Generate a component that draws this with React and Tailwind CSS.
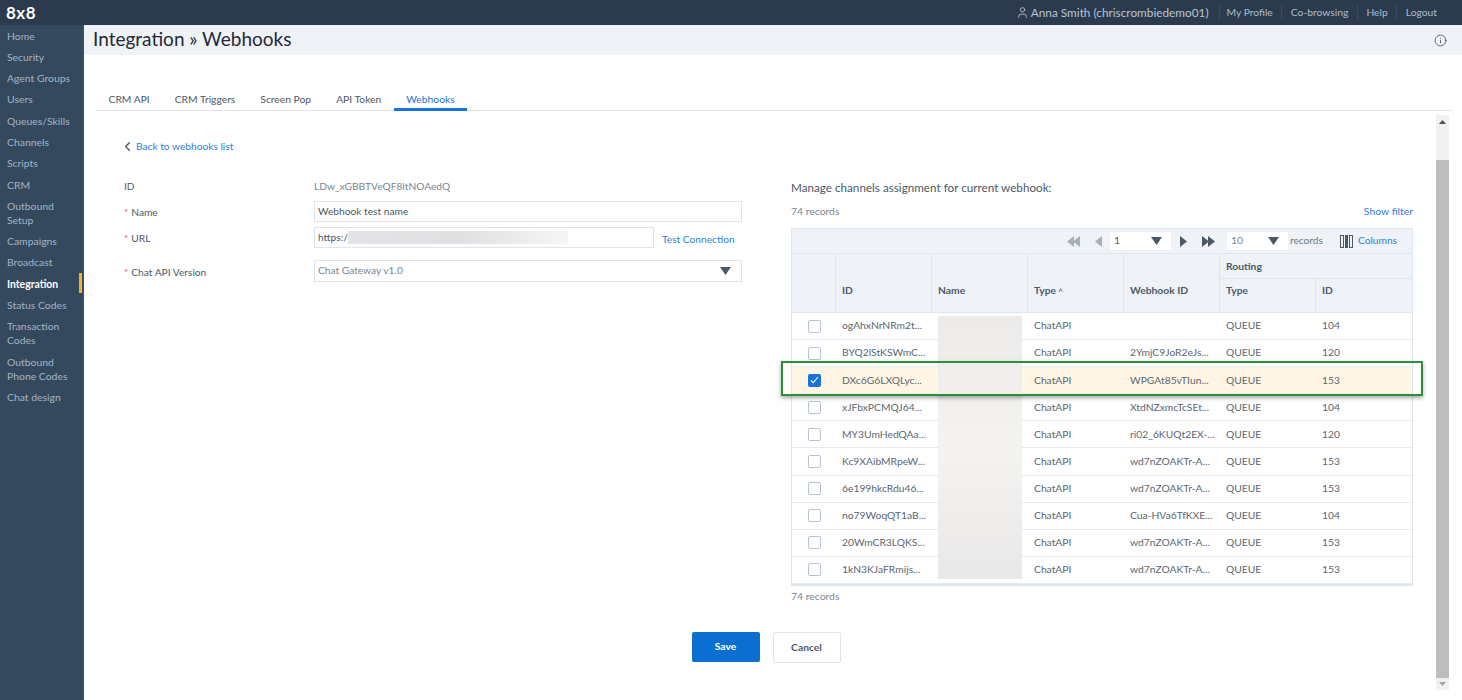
import { ChevronLeft, Info, User } from "lucide-react";

const nav = [
  "Home", "Security", "Agent Groups", "Users", "Queues/Skills", "Channels", "Scripts", "CRM",
  "Outbound Setup", "Campaigns", "Broadcast", "Integration", "Status Codes", "Transaction Codes",
  "Outbound Phone Codes", "Chat design",
];

const tabs = ["CRM API", "CRM Triggers", "Screen Pop", "API Token", "Webhooks"];

const rows = [
  ["ogAhxNrNRm2t...", "", "104"],
  ["BYQ2lStKSWmC...", "2YmjC9JoR2eJs...", "120"],
  ["DXc6G6LXQLyc...", "WPGAt85vTIun...", "153"],
  ["xJFbxPCMQJ64...", "XtdNZxmcTcSEt...", "104"],
  ["MY3UmHedQAa...", "ri02_6KUQt2EX-...", "120"],
  ["Kc9XAibMRpeW...", "wd7nZOAKTr-A...", "153"],
  ["6e199hkcRdu46...", "wd7nZOAKTr-A...", "153"],
  ["no79WoqQT1aB...", "Cua-HVa6TfKXE...", "104"],
  ["20WmCR3LQKS...", "wd7nZOAKTr-A...", "153"],
  ["1kN3KJaFRmijs...", "wd7nZOAKTr-A...", "153"],
];

const cols = "grid grid-cols-[44px_96px_96px_96px_96px_96px_1fr]";

function Caret({ className = "" }) {
  return (
    <svg width="11" height="8" viewBox="0 0 11 8" className={className}>
      <path d="M0 0h11L5.5 8z" fill="#4b5866" />
    </svg>
  );
}

function PagerArrow({ dir, double, color }) {
  const tri = dir === "left" ? "M7 0v11L0 5.5z" : "M0 0v11l7-5.5z";
  return (
    <svg width={double ? 13 : 7} height="11" viewBox={double ? "0 0 13 11" : "0 0 7 11"}>
      <path d={tri} fill={color} />
      {double && <path d={tri} fill={color} transform="translate(6 0)" />}
    </svg>
  );
}

function RequiredLabel({ children }) {
  return (
    <span className="w-[190px] pt-[3px] text-[10.2px] text-[#4d5966]">
      <span className="text-[#d9534f] mr-[3px] text-[10px]">*</span>
      {children}
    </span>
  );
}

function Pager({ value, muted }) {
  return (
    <div className={`w-[61px] h-[18px] bg-white flex items-center justify-between pl-1 pr-[9px] text-[10.4px] ${muted ? "text-[#7a8692]" : "text-[#4d5966]"}`}>
      <span>{value}</span>
      <Caret />
    </div>
  );
}

export default function App() {
  return (
    <div className="w-full h-screen overflow-hidden flex flex-col bg-white font-[Lato,sans-serif]">
      <header className="h-[25px] shrink-0 bg-[#2b3a4c] flex items-center justify-between pl-[6px] pr-[25px]">
        <span className="text-white font-bold text-[17px] tracking-[0.5px] font-['Liberation_Sans',sans-serif]">8x8</span>
        <div className="flex items-center text-[10.3px] text-[#aebccc]">
          <User size={13} strokeWidth={1.5} className="mr-[2px] text-[#c3cfdb]" />
          <span className="text-[11.8px] text-[#b9c6d6] pr-[10px] border-r border-[#3b4b5e]">Anna Smith (chriscrombiedemo01)</span>
          <span className="pl-[7px] pr-[8.5px] border-r border-[#3b4b5e]">My Profile</span>
          <span className="px-[8.5px] border-r border-[#3b4b5e]">Co-browsing</span>
          <span className="px-[8.5px] border-r border-[#3b4b5e]">Help</span>
          <span className="pl-[8.5px]">Logout</span>
        </div>
      </header>

      <div className="flex flex-1 min-h-0">
        <aside className="w-[84px] shrink-0 bg-[#34495e] border-r border-[#3f5368]">
          {nav.map((item) => (
            <div
              key={item}
              className={`relative pl-[7px] pr-2 py-[3.65px] text-[10.4px] leading-[14px] ${item === "Integration" ? "font-bold text-white" : "text-[#a3b4c7]"}`}
            >
              {item}
              {item === "Integration" && <span className="absolute right-[1px] top-0 w-[3px] h-[20px] bg-[#f5b324]" />}
            </div>
          ))}
        </aside>

        <main className="flex-1 min-w-0 flex flex-col">
          <div className="h-[30px] shrink-0 bg-[#eff2f7] flex items-center justify-between pl-[9px] pr-[15px]">
            <h1 className="text-[19px] leading-none text-[#1f2a36] pb-[3px]">Integration » Webhooks</h1>
            <Info size={13} strokeWidth={1.5} className="text-[#3d4a58]" />
          </div>

          <div className="ml-[12px] mr-[9px] mt-[35px] h-[21px] shrink-0 flex border-b border-[#dfe5ee]">
            {tabs.map((tab) => (
              <div
                key={tab}
                className={`px-[12.5px] h-[21px] text-[10.3px] leading-[18px] ${tab === "Webhooks" ? "text-[#1a73d8] border-b-[3px] border-[#1a73d8]" : "text-[#4d5966]"}`}
              >
                {tab}
              </div>
            ))}
          </div>

          <div className="flex flex-1 min-h-0 ml-[12px]">
            <div className="flex-1 min-w-0 flex flex-col">
              <div className="flex pl-[28px] flex-1">
                <div className="w-[667px] shrink-0 pt-[28px]">
                  <a className="flex items-center text-[10.2px] text-[#2f7de1] h-[15px]">
                    <ChevronLeft size={15} strokeWidth={2.2} className="text-[#4d5966] -ml-[4px] mr-[1px]" />
                    Back to webhooks list
                  </a>
                  <div className="mt-[26px] flex items-center h-[14px] text-[10.2px]">
                    <span className="w-[190px] text-[#4d5966]">ID</span>
                    <span className="text-[#7a8692]">LDw_xGBBTVeQF8ltNOAedQ</span>
                  </div>
                  <div className="mt-[7px] flex items-center h-[21px]">
                    <RequiredLabel>Name</RequiredLabel>
                    <div className="w-[428px] h-[21px] border border-[#dfe5ee] px-[3px] text-[10.2px] leading-[19px] text-[#4d5966]">Webhook test name</div>
                  </div>
                  <div className="mt-[5px] flex items-center h-[21px]">
                    <RequiredLabel>URL</RequiredLabel>
                    <div className="w-[340px] h-[21px] border border-[#dfe5ee] pl-[3px] text-[10.2px] leading-[19px] text-[#4d5966] flex items-center">
                      https:/
                      <span className="h-[13px] w-[220px] bg-gradient-to-r from-[#e4e3e5] via-[#e0dfe1] to-[#f6f6f6]" />
                    </div>
                    <span className="ml-[8px] mt-[4px] text-[10.2px] text-[#2f7de1] whitespace-nowrap">Test Connection</span>
                  </div>
                  <div className="mt-[12px] flex items-center h-[22px]">
                    <RequiredLabel>Chat API Version</RequiredLabel>
                    <div className="w-[428px] h-[22px] border border-[#dfe5ee] pl-[3px] pr-[10px] text-[10.2px] text-[#7a8692] flex items-center justify-between">
                      Chat Gateway v1.0
                      <Caret />
                    </div>
                  </div>
                </div>

                <div className="w-[622px] shrink-0 pt-[69px]">
                  <p className="text-[11.7px] leading-[14px] text-[#4d5966]">Manage channels assignment for current webhook:</p>
                  <div className="mt-[11px] h-[14px] flex items-center justify-between text-[10.4px]">
                    <span className="text-[#7a8692]">74 records</span>
                    <span className="text-[#2f7de1]">Show filter</span>
                  </div>

                  <div className="relative mt-[9px] border-x border-b-2 border-[#dfe6ee]">
                    <div className="h-[25px] bg-[#eff2f7] border-t border-[#dfe6ee] flex items-center justify-end pr-[15px] gap-[8px] text-[10.2px]">
                      <PagerArrow dir="left" double color="#a6b0bb" />
                      <span className="ml-[7px]"><PagerArrow dir="left" color="#a6b0bb" /></span>
                      <Pager value="1" />
                      <span className="ml-[1px]"><PagerArrow dir="right" color="#4b5866" /></span>
                      <span className="ml-[7px]"><PagerArrow dir="right" double color="#4b5866" /></span>
                      <span className="ml-[4px]"><Pager value="10" muted /></span>
                      <span className="-ml-[6px] text-[#6d7986]">records</span>
                      <svg width="13" height="13" viewBox="0 0 13 13" className="ml-[9px]">
                        <rect x="0.5" y="0.5" width="3" height="12" fill="none" stroke="#4b5866" />
                        <rect x="5" y="0" width="3" height="13" fill="#4b5866" />
                        <rect x="9.5" y="0.5" width="3" height="12" fill="none" stroke="#4b5866" />
                      </svg>
                      <span className="-ml-[3px] text-[#2f7de1]">Columns</span>
                    </div>

                    <div className={`${cols} h-[60px] bg-[#eff2f7] border-y border-[#dfe6ee] text-[10.3px] font-bold text-[#4d5966]`}>
                      <div className="border-r border-[#dfe6ee]" />
                      {["ID", "Name"].map((h) => (
                        <div key={h} className="border-r border-[#dfe6ee] flex items-end pl-[6px] pb-[14px]">{h}</div>
                      ))}
                      <div className="border-r border-[#dfe6ee] flex items-end pl-[6px] pb-[14px]">
                        Type<span className="ml-[2px] font-normal text-[9px]">^</span>
                      </div>
                      <div className="border-r border-[#dfe6ee] flex items-end pl-[6px] pb-[14px]">Webhook ID</div>
                      <div className="col-span-2 flex flex-col">
                        <div className="h-[25px] border-b border-[#dfe6ee] pl-[6px] leading-[24px]">Routing</div>
                        <div className="flex-1 grid grid-cols-[96px_1fr]">
                          <div className="border-r border-[#dfe6ee] flex items-end pl-[6px] pb-[14px]">Type</div>
                          <div className="flex items-end pl-[6px] pb-[14px]">ID</div>
                        </div>
                      </div>
                    </div>

                    {rows.map(([id, hook, route], i) => (
                      <div key={id} className={`${cols} h-[27.1px] items-center border-b border-[#e6ebf2] text-[10.3px] text-[#5a6673] ${i === 2 ? "bg-[#fff6e6]" : "bg-white"}`}>
                        <div className="flex justify-center pl-[1px]">
                          {i === 2 ? (
                            <span className="w-[13px] h-[13px] rounded-[2px] bg-[#1a73d8] flex items-center justify-center">
                              <svg width="9" height="8" viewBox="0 0 9 8"><path d="M1 4.5l2.3 2.3L8 1" fill="none" stroke="#fff" strokeWidth="1.1" /></svg>
                            </span>
                          ) : (
                            <span className="w-[13px] h-[13px] rounded-[2px] border border-[#b6c3d6] bg-white" />
                          )}
                        </div>
                        <div className="pl-[6px] whitespace-nowrap">{id}</div>
                        <div />
                        <div className="pl-[6px]">ChatAPI</div>
                        <div className="pl-[6px] whitespace-nowrap">{hook}</div>
                        <div className="pl-[6px]">QUEUE</div>
                        <div className="pl-[6px]">{route}</div>
                      </div>
                    ))}

                    {/* name column redaction */}
                    <div className="absolute left-[146px] top-[88px] w-[84px] h-[263px] bg-gradient-to-b from-[#ecebea] via-[#f5f3f0] to-[#e9e8e8]" />
                    {/* green highlight over selected row */}
                    <div className="absolute -left-[11px] -right-[11px] top-[133px] h-[35px] border-2 border-[#2b9138] shadow-[0_2px_4px_rgba(0,0,0,0.35)]" />
                  </div>

                  <p className="mt-[3px] text-[10.4px] leading-[14px] text-[#7a8692]">74 records</p>
                </div>
              </div>

              <div className="flex justify-center gap-[13px] mb-[37px]">
                <button className="w-[68px] h-[30px] bg-[#0a6fd0] rounded-[2px] text-white text-[10.3px] font-bold">Save</button>
                <button className="w-[68px] h-[31px] bg-white border border-[#dfe5ee] rounded-[2px] text-[#4d5966] text-[10.3px] font-bold">Cancel</button>
              </div>
            </div>

            <div className="w-[13px] mr-[13px] mt-[4px] mb-[10px] shrink-0 flex flex-col">
              <div className="h-[13px] bg-[#f1f1f1] flex items-center justify-center">
                <svg width="7" height="4" viewBox="0 0 7 4"><path d="M0 4h7L3.5 0z" fill="#505050" /></svg>
              </div>
              <div className="h-[32px] bg-[#f1f1f1]" />
              <div className="flex-1 bg-[#bdbdbd]" />
              <div className="h-[12px] bg-[#f1f1f1] flex items-center justify-center">
                <svg width="7" height="4" viewBox="0 0 7 4"><path d="M0 0h7L3.5 4z" fill="#a3a3a3" /></svg>
              </div>
            </div>
          </div>
        </main>
      </div>
    </div>
  );
}
